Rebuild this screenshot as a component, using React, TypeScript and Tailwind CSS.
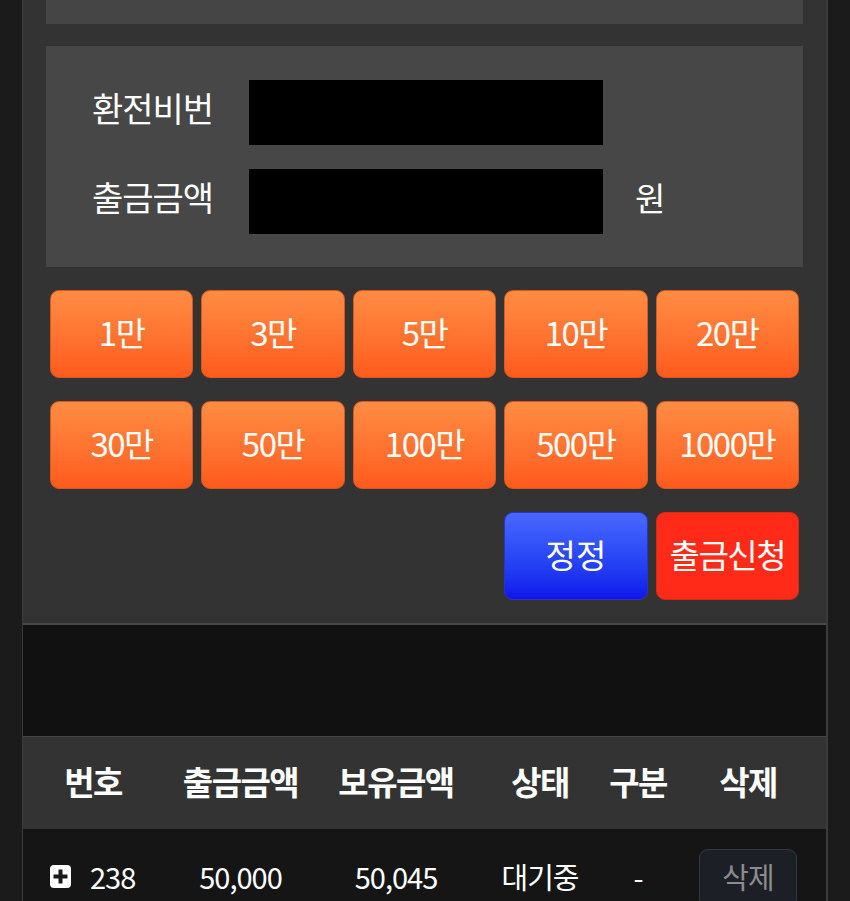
import React from "react";

const font = { fontFamily: '"Noto Sans CJK KR", "Noto Sans", sans-serif' };

const amounts = ["1만", "3만", "5만", "10만", "20만", "30만", "50만", "100만", "500만", "1000만"];

function PlusIcon() {
  return (
    <svg width="21" height="23" viewBox="0 0 21 23" className="shrink-0">
      <rect x="0" y="0" width="21" height="23" rx="4" fill="#ffffff" />
      <rect x="8.5" y="4.5" width="4" height="14" fill="#1a1a1a" />
      <rect x="3.5" y="9.5" width="14" height="4" fill="#1a1a1a" />
    </svg>
  );
}

export default function App() {
  return (
    <div className="w-[850px] h-[901px] overflow-hidden bg-[#1b1b1b] px-[22px]" style={font}>
      <div className="border-l border-r-2 border-[#3b3b3b] bg-[#333333]">
        <div className="px-[23px]">
          <div className="h-[24px] bg-[#454545]" />
          <div className="mt-[22px] h-[221px] bg-[#474747] pl-[46px] pt-[34px] flex flex-col gap-[24px]">
            <div className="flex items-center h-[65px]">
              <div className="w-[157px] text-[34px] leading-none text-white pb-[9px] tracking-[-1px]">환전비번</div>
              <div className="w-[354px] h-[65px] bg-black" />
            </div>
            <div className="flex items-center h-[65px]">
              <div className="w-[157px] text-[34px] leading-none text-white pb-[9px] tracking-[-1px]">출금금액</div>
              <div className="w-[354px] h-[65px] bg-black" />
              <div className="ml-[32px] text-[33px] leading-none text-white pb-[9px]">원</div>
            </div>
          </div>
          <div className="px-[4px] pt-[23px] pb-[23px]">
            <div className="grid grid-cols-5 gap-x-[8px] gap-y-[23px]">
              {amounts.map((a) => (
                <div
                  key={a}
                  className="h-[88px] rounded-[9px] border border-[#d9581f] bg-gradient-to-b from-[#ff8c42] to-[#ff5a1c] flex items-center justify-center text-white text-[33px] leading-none tracking-[-1.5px] pb-[4px]"
                >
                  {a}
                </div>
              ))}
              <div className="col-start-4 h-[88px] rounded-[9px] border border-[#2a35c8] bg-gradient-to-b from-[#4a68ff] to-[#1212ea] flex items-center justify-center text-white text-[33px] leading-none pb-[4px]">
                정정
              </div>
              <div className="h-[88px] rounded-[9px] border border-[#d62a14] bg-[#ff2a17] flex items-center justify-center text-white text-[33px] leading-none tracking-[-1.5px] pb-[4px]">
                출금신청
              </div>
            </div>
          </div>
        </div>
        <div className="h-[2px] bg-[#484848]" />
        <div className="h-[111px] bg-[#121111]" />
        <div className="border-t border-[#444444] bg-[#333333] h-[93px] grid grid-cols-[140px_155px_156px_132px_64px_1fr] items-center text-white font-bold text-[33px] leading-none tracking-[-1.5px]">
          <div className="text-center pb-[4px]">번호</div>
          <div className="text-center pb-[4px]">출금금액</div>
          <div className="text-center pb-[4px]">보유금액</div>
          <div className="text-center pb-[4px]">상태</div>
          <div className="text-center pb-[4px]">구분</div>
          <div className="text-center pb-[4px]">삭제</div>
        </div>
        <div className="bg-[#161516] h-[120px] grid grid-cols-[140px_155px_156px_132px_64px_1fr] items-start text-white text-[29px] leading-none tracking-[-1px]">
          <div className="flex items-center gap-[19px] pl-[27px] h-[94px]">
            <PlusIcon />
            <span>238</span>
          </div>
          <div className="flex items-center justify-center h-[94px]">50,000</div>
          <div className="flex items-center justify-center h-[94px]">50,045</div>
          <div className="flex items-center justify-center h-[94px]">대기중</div>
          <div className="flex items-center justify-center h-[94px]">-</div>
          <div className="flex justify-center pt-[20px]">
            <div className="w-[98px] h-[58px] rounded-[9px] border border-[#2f3846] bg-[#1d1f26] flex items-center justify-center text-[#8c8c8c] text-[29px] leading-none pb-[4px]">
              삭제
            </div>
          </div>
        </div>
      </div>
    </div>
  );
}
